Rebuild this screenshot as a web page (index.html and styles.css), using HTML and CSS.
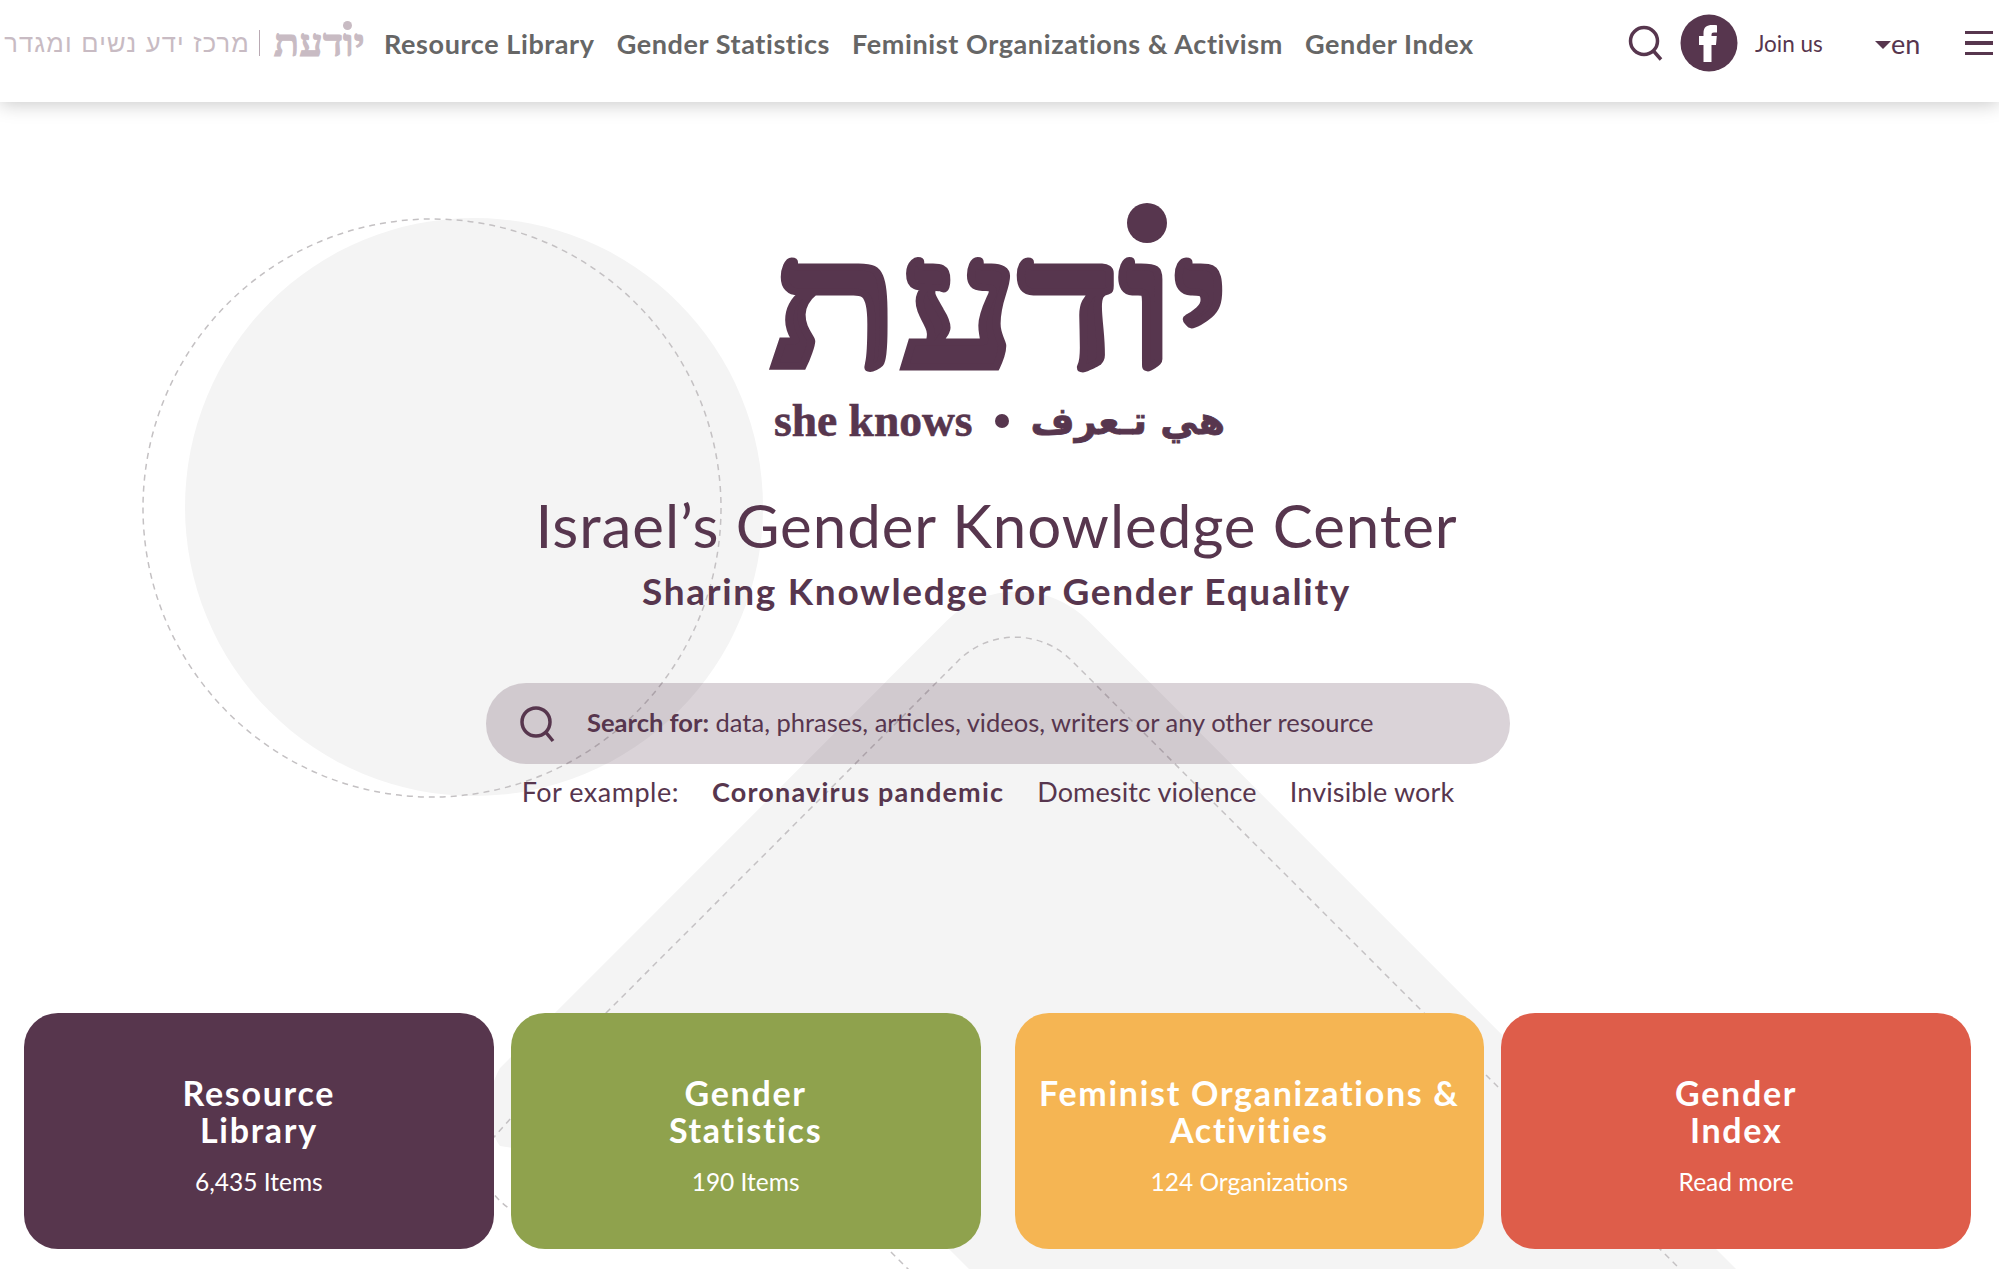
FILE: index.html
```html
<!DOCTYPE html>
<html lang="en">
<head>
<meta charset="utf-8">
<title>Israel's Gender Knowledge Center</title>
<link rel="stylesheet" href="styles.css">
</head>
<body>
<svg class="decor" width="1999" height="1269" viewBox="0 0 1999 1269" aria-hidden="true">
  <circle class="decor-fill" cx="474" cy="507" r="289"/>
  <path class="decor-fill" d="M946.8 620.7A100 100 0 0 1 1088.2 620.7L1800 1333H1033L940 1240C760 1190 600 1160 500 1146C485 1125 485 1095 500 1068Z"/>
  <circle class="decor-dash" cx="432" cy="508" r="289"/>
  <path class="decor-dash" d="M606 1013L958 661A80 80 0 0 1 1072 661L1760 1349"/>
  <path class="decor-dash" d="M606 1013L494 1137C475 1160 482 1190 510 1209C640 1225 800 1230 880 1241L930 1291"/>
</svg>
<header class="topbar">
  <a class="brand">
    <span class="brand-tag" dir="rtl">מרכז ידע נשים ומגדר</span>
    <span class="brand-bar"></span>
    <span class="brand-mark"><span class="brand-glyphs" dir="rtl">יודעת</span><i class="brand-dot"></i></span>
  </a>
  <nav class="nav">
    <a>Resource Library</a>
    <a>Gender Statistics</a>
    <a>Feminist Organizations &amp; Activism</a>
    <a>Gender Index</a>
  </nav>
  <div class="tools">
    <svg class="tool-search" width="36" height="36" viewBox="0 0 36 36"><circle cx="16" cy="16" r="13.500"/><path d="M25.500 26L33 34.500"/></svg>
    <span class="fb"><svg width="58" height="58" viewBox="0 0 58 58"><circle cx="29" cy="29" r="28.500" fill="#57364e"/><path fill="#fff" d="M23.500 48V31H19V22h4.500v-3C23.500 13 27 11 32 11c2.500 0 4.500.2 5 .3v7.200h-3c-2 0-2.500.8-2.500 2.500V22h5.300l-.8 9h-4.500v17z"/></svg></span>
    <span class="join">Join us</span>
    <span class="lang"><i class="caret"></i>en</span>
    <span class="burger"><i></i><i></i><i></i></span>
  </div>
</header>
<main class="hero">
  <div class="logo">
    <div class="logo-he"><span class="logo-glyphs" dir="rtl">יודעת</span><i class="logo-dot"></i></div>
    <div class="logo-sub">
      <span class="logo-en">she knows</span>
      <i class="logo-bullet"></i>
      <span class="logo-ar" dir="rtl" lang="ar">هي تـعرف</span>
    </div>
  </div>
  <h1 class="title">Israel’s Gender Knowledge Center</h1>
  <h2 class="subtitle">Sharing Knowledge for Gender Equality</h2>
  <div class="search">
    <svg class="search-icon" width="36" height="38" viewBox="0 0 36 38"><circle cx="17" cy="17" r="14"/><path d="M27 27.500L34 36"/></svg>
    <p class="search-text"><b>Search for:</b> data, phrases, articles, videos, writers or any other resource</p>
  </div>
  <div class="examples">
    <span class="ex-label">For example:</span>
    <a class="strong">Coronavirus pandemic</a>
    <a>Domesitc violence</a>
    <a>Invisible work</a>
  </div>
  <section class="cards">
    <div class="pair">
      <a class="card card-plum"><strong>Resource<br>Library</strong><span>6,435 Items</span></a>
      <a class="card card-green"><strong>Gender<br>Statistics</strong><span>190 Items</span></a>
    </div>
    <div class="pair">
      <a class="card card-amber"><strong>Feminist Organizations &amp;<br>Activities</strong><span>124 Organizations</span></a>
      <a class="card card-red"><strong>Gender<br>Index</strong><span>Read more</span></a>
    </div>
  </section>
</main>
</body>
</html>
```
FILE: styles.css
```css
* { box-sizing: border-box; }
html, body { margin: 0; height: 1269px; overflow: hidden; }
body { position: relative; background: #fff; color: #57364e; font-family: Lato, "Noto Sans", sans-serif; }
i { font-style: normal; display: block; }

.decor { position: absolute; left: 0; top: 0; }
.decor-fill { fill: #f4f4f4; }
.decor-dash { fill: none; stroke: #c4c1c3; stroke-width: 1.5; stroke-dasharray: 6 5; }

.topbar { position: relative; display: flex; align-items: center; height: 102px; padding: 0 6px 16px 5px; background: #fff; box-shadow: 0 2px 18px rgba(0,0,0,.22); }
.brand { display: flex; align-items: center; color: #c8bbc3; }
.brand-tag { width: 245px; font: 400 25.500px/36px "Liberation Sans", sans-serif; letter-spacing: 1.200px; white-space: nowrap; }
.brand-bar { width: 1px; height: 26px; margin: 0 15px 0 9px; background: #b9a9b3; }
.brand-mark { position: relative; display: block; width: 88px; height: 46px; text-align: center; }
.brand-glyphs { display: inline-block; font: 700 38px/46px "Liberation Serif", serif; -webkit-text-stroke: 1px #c8bbc3; transform: scaleX(1.1); }
.brand-dot { position: absolute; left: 68px; top: 1px; width: 9px; height: 9px; border-radius: 50%; background: #c8bbc3; }
.nav { display: flex; gap: 22px; margin-left: 21px; font-size: 27px; font-weight: 700; color: #666; letter-spacing: .6px; white-space: nowrap; }
.tools { display: flex; align-items: center; margin-left: auto; }
.tool-search { margin-right: 16px; fill: none; stroke: #57364e; stroke-width: 3.500; }
.fb { display: block; height: 58px; margin-right: 17px; }
.join { width: 120px; font-size: 22.500px; }
.lang { display: flex; align-items: center; width: 90px; font-size: 27px; }
.caret { width: 0; height: 0; margin-top: 4px; border: 8px solid transparent; border-top-color: #57364e; border-bottom: 0; }
.burger { display: flex; flex-direction: column; gap: 7px; width: 28px; }
.burger i { height: 3.500px; background: #57364e; }

.hero { position: relative; display: flex; flex-direction: column; align-items: center; }
.logo { width: 451px; margin-top: 98px; }
.logo-he { position: relative; height: 190px; font: 700 180px/214px "Liberation Serif", serif; -webkit-text-stroke: 7px #57364e; text-align: center; white-space: nowrap; }
.logo-glyphs { display: inline-block; transform: scaleX(1.17); }
.logo-dot { position: absolute; left: 353px; top: 3px; width: 40px; height: 40px; border-radius: 50%; background: #57364e; }
.logo-sub { display: flex; align-items: center; justify-content: space-between; height: 62px; }
.logo-en { font: 700 45.500px/56px "Liberation Serif", serif; -webkit-text-stroke: .6px #57364e; }
.logo-bullet { width: 14px; height: 14px; border-radius: 50%; background: #57364e; }
.logo-ar { font: 700 38px/56px "DejaVu Sans", sans-serif; -webkit-text-stroke: .8px #57364e; white-space: nowrap; }

.title { margin: 37px 0 0 -6px; font-size: 60px; line-height: 72px; font-weight: 400; letter-spacing: .95px; white-space: nowrap; }
.subtitle { margin: 7px 0 0 -6px; font-size: 37px; line-height: 46px; font-weight: 700; letter-spacing: 1.700px; white-space: nowrap; }

.search { display: flex; align-items: center; width: 1024px; height: 81px; margin: 69px 0 0 -3px; padding-left: 33px; border-radius: 40px; background: rgba(86,53,76,.22); }
.search-icon { flex: none; fill: none; stroke: #57364e; stroke-width: 3.500; }
.search-text { margin: 0 0 3px 32px; font-size: 25.500px; white-space: nowrap; }
.examples { display: flex; margin: 10px 0 0 -23px; gap: 33px; font-size: 27px; line-height: 36px; letter-spacing: .13px; }
.ex-label { letter-spacing: .5px; }
.strong { font-weight: 700; letter-spacing: 1.200px; }

.cards { display: flex; gap: 34px; width: 100%; margin-top: 203px; padding: 0 28px 0 24px; }
.pair { display: flex; flex: 1; gap: 17px; }
.card { display: flex; flex: 1; flex-direction: column; align-items: center; height: 236px; padding-top: 61px; border-radius: 34px; color: #fff; text-align: center; }
.card strong { font-size: 34px; line-height: 37px; font-weight: 700; letter-spacing: 1.700px; white-space: nowrap; }
.card span { margin-top: 20px; font-size: 24.500px; line-height: 28px; }
.card-plum { background: #57364d; }
.card-green { background: #8fa24d; }
.card-amber { background: #f5b553; }
.card-red { background: #de5d4a; }
```
